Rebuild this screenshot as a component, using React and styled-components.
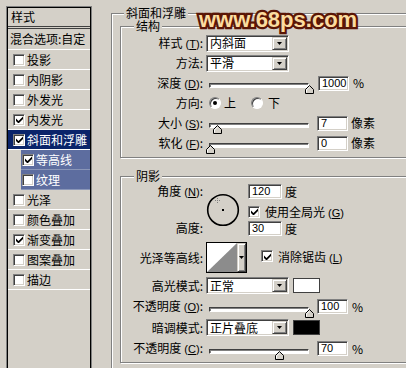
import React from 'react';
import styled, { createGlobalStyle, css } from 'styled-components';

const FACE = '#d4d0c8';

const GlobalStyle = createGlobalStyle`
  html, body { margin: 0; padding: 0; background: ${FACE}; }
  body {
    font-family: "Noto Sans CJK SC", "Liberation Sans", sans-serif;
    font-size: 12px;
    color: #000;
  }
`;

const sunken = css`
  box-sizing: border-box;
  border: 1px solid;
  border-color: #808080 #fff #fff #808080;
  box-shadow: inset 1px 1px #404040, inset -1px -1px ${FACE};
`;

const raised = css`
  box-sizing: border-box;
  border: 1px solid;
  border-color: ${FACE} #404040 #404040 ${FACE};
  box-shadow: inset 1px 1px #fff, inset -1px -1px #808080;
`;

const Window = styled.div`
  position: relative;
  width: 406px;
  height: 368px;
  overflow: hidden;
  background: ${FACE};
`;

const Dialog = styled.div`
  display: flex;
  align-items: flex-start;
  width: 640px;
  padding: 6px 0 0 6px;
`;

/* ---------- left list ---------- */

const StylePanel = styled.div`
  flex: none;
  width: 86px;
  height: 380px;
  box-sizing: border-box;
  border: 1px solid #808080;
  box-shadow: inset 1px 1px #000, inset -1px 0 #000;
  padding: 1px;
  margin-right: 19px;
`;

const PanelHead = styled.div`
  height: 18px;
  line-height: 18px;
  padding-left: 3px;
  border-bottom: 3px double #404040;
`;

const BlendRow = styled.div`
  height: 20px;
  line-height: 20px;
  padding-left: 2px;
  border-bottom: 1px solid #fff;
  white-space: nowrap;
`;

const StyleItem = styled.div`
  display: flex;
  align-items: center;
  gap: 2px;
  height: 19px;
  line-height: 14px;
  white-space: nowrap;
  border-bottom: 1px solid ${p => (p.$sub ? '#8a96b8' : '#fff')};
  margin-left: ${p => (p.$sub ? 13 : 0)}px;
  padding-left: ${p => (p.$sub ? 1 : 5)}px;
  background: ${p => (p.$active ? '#0a246a' : p.$sub ? '#5d6d9f' : 'transparent')};
  color: ${p => (p.$active || p.$sub ? '#fff' : '#000')};
`;

const CheckBox = styled.span`
  ${sunken};
  flex: none;
  display: inline-flex;
  align-items: center;
  justify-content: center;
  width: 12px;
  height: 12px;
  background: #fff;
`;

function Check({ on }) {
  return (
    <CheckBox>
      {on && (
        <svg width="7" height="7" viewBox="0 0 7 7">
          <path d="M0 2.5 L2.5 5 L7 0.5 V3 L2.5 7.5 L0 5 Z" fill="#000" />
        </svg>
      )}
    </CheckBox>
  );
}

const styleList = [
  { name: '投影' },
  { name: '内阴影' },
  { name: '外发光' },
  { name: '内发光', on: true },
  { name: '斜面和浮雕', on: true, active: true },
  { name: '等高线', on: true, sub: true },
  { name: '纹理', sub: true },
  { name: '光泽' },
  { name: '颜色叠加' },
  { name: '渐变叠加', on: true },
  { name: '图案叠加' },
  { name: '描边' },
];

/* ---------- group boxes ---------- */

const Group = styled.fieldset`
  margin: ${p => p.$mt || 0}px 0 0;
  padding: ${p => p.$pad || '0'};
  width: ${p => p.$w}px;
  border: 1px solid #808080;
  box-shadow: inset 1px 1px #fff, 1px 1px #fff;
  min-width: 0;
`;

const Caption = styled.legend`
  margin-left: ${p => p.$ml}px;
  padding: 0 2px;
  height: 12px;
  line-height: 12px;
  background: ${FACE};
`;

/* ---------- form rows ---------- */

const Row = styled.div`
  display: flex;
  align-items: center;
  height: ${p => p.$h || 20}px;
`;

const Label = styled.span`
  flex: none;
  width: 82px;
  margin-right: 3px;
  text-align: right;
  white-space: nowrap;
  line-height: 14px;
`;

const Key = styled.span`
  font-family: "Liberation Sans", sans-serif;
  font-size: 11px;
  text-decoration: underline;
`;

const Paren = styled.span`
  font-family: "Liberation Sans", sans-serif;
  font-size: 11px;
  margin-left: 3px;
`;

function Acc({ k }) {
  return (
    <Paren>
      (<Key>{k}</Key>)
    </Paren>
  );
}

const SelectBox = styled.div`
  ${sunken};
  flex: none;
  display: flex;
  align-items: center;
  width: 83px;
  height: 17px;
  padding: 0 1px 0 3px;
  background: #fff;
  line-height: 14px;
`;

const DropBtn = styled.span`
  ${raised};
  margin-left: auto;
  width: 15px;
  height: 13px;
  display: flex;
  align-items: center;
  justify-content: center;
  background: ${FACE};
`;

function Arrow() {
  return (
    <svg width="5" height="3" viewBox="0 0 5 3">
      <path d="M0 0 H5 L2.5 3 Z" fill="#000" />
    </svg>
  );
}

function Select({ children }) {
  return (
    <SelectBox>
      {children}
      <DropBtn>
        <Arrow />
      </DropBtn>
    </SelectBox>
  );
}

const SliderBox = styled.div`
  position: relative;
  flex: none;
  width: 106px;
  height: 16px;
`;

const Track = styled.div`
  box-sizing: border-box;
  margin: 8px 0 0 3px;
  width: 100px;
  height: 5px;
  border: 1px solid;
  border-color: #404040 #fff #fff #404040;
  box-shadow: inset 1px 1px #808080;
  background: #fff;
`;

const Thumb = styled.svg`
  position: absolute;
  top: 10px;
`;

function Slider({ pct }) {
  return (
    <SliderBox>
      <Track />
      <Thumb width="9" height="9" viewBox="0 0 9 9" style={{ left: `${pct - 1.5}px` }}>
        <path d="M0.5 8.5 V4.5 L4.5 0.5 L8.5 4.5 V8.5 Z" fill={FACE} stroke="#000" />
        <path d="M1.5 7.5 V4.9 L4.5 1.9" fill="none" stroke="#fff" />
      </Thumb>
    </SliderBox>
  );
}

const NumBox = styled.div`
  ${sunken};
  flex: none;
  width: ${p => p.$w || 31}px;
  height: 15px;
  margin-left: ${p => (p.$ml === undefined ? 5 : p.$ml)}px;
  padding-left: 3px;
  background: #fff;
  font-family: "Liberation Sans", sans-serif;
  font-size: 11px;
  line-height: 13px;
`;

const Unit = styled.span`
  margin-left: ${p => p.$ml || 4}px;
  line-height: 14px;
  white-space: nowrap;
`;

const Radio = styled.span`
  box-sizing: border-box;
  flex: none;
  width: 12px;
  height: 12px;
  margin-left: ${p => p.$ml}px;
  border-radius: 50%;
  border: 1px solid;
  border-color: #808080 #fff #fff #808080;
  box-shadow: inset 1px 1px #404040;
  background: #fff;
  display: flex;
  align-items: center;
  justify-content: center;
  &::after {
    content: '';
    width: 4px;
    height: 4px;
    border-radius: 50%;
    background: ${p => (p.$on ? '#000' : 'transparent')};
  }
`;

const RadioText = styled.span`
  margin-left: ${p => p.$ml}px;
  line-height: 14px;
`;

/* ---------- shadow block ---------- */

const ShadowBody = styled.div`
  padding-top: 2px;
`;

const AngleBlock = styled.div`
  display: flex;
  align-items: flex-start;
  height: 52px;
`;

const LabelCol = styled.div`
  display: flex;
  flex-direction: column;
  justify-content: space-between;
  height: 51px;
`;

const Dial = styled.svg`
  flex: none;
  margin-top: 9px;
`;

const AngleInputs = styled.div`
  display: flex;
  flex-direction: column;
  margin-left: 8px;
`;

const InputLine = styled.div`
  display: flex;
  align-items: center;
`;

const CheckLine = styled.label`
  display: flex;
  align-items: center;
  gap: 5px;
  margin: 6px 0 3px;
  height: 13px;
  white-space: nowrap;
`;

const ContourPick = styled.div`
  flex: none;
  display: flex;
  width: 41px;
  height: 31px;
  border: 1px solid #000;
  box-sizing: border-box;
`;

const ContourThumb = styled.svg`
  flex: none;
  display: block;
`;

const ContourDrop = styled.span`
  ${raised};
  flex: 1;
  display: flex;
  align-items: center;
  justify-content: center;
  background: ${FACE};
`;

const Swatch = styled.span`
  flex: none;
  width: 27px;
  height: 15px;
  margin-left: 4px;
  box-sizing: border-box;
  border: 1px solid #404040;
  background: ${p => p.$c};
`;

const AntiAlias = styled.label`
  display: flex;
  align-items: center;
  gap: 5px;
  margin: -3px 0 0 14px;
  white-space: nowrap;
`;

/* ---------- watermark ---------- */

const Watermark = styled.div`
  position: absolute;
  left: 199px;
  top: 7px;
  font-family: "Liberation Sans", "DejaVu Sans", sans-serif;
  font-weight: 700;
  font-size: 22px;
  line-height: 26px;
  color: #fbdca0;
  -webkit-text-stroke: 4.5px #5a1606;
  paint-order: stroke fill;
`;

export default function App() {
  return (
    <Window>
      <GlobalStyle />
      <Dialog>
        <StylePanel>
          <PanelHead>样式</PanelHead>
          <BlendRow>混合选项:自定</BlendRow>
          {styleList.map(item => (
            <StyleItem key={item.name} $active={item.active} $sub={item.sub}>
              <Check on={item.on} />
              <span>{item.name}</span>
            </StyleItem>
          ))}
        </StylePanel>

        <Group $w={480} $pad="0 0 20px 8px" $mt={1}>
          <Caption $ml={4}>斜面和浮雕</Caption>

          <Group $w={400} $mt={1} $pad="1px 0 4px 0">
            <Caption $ml={13}>结构</Caption>
            <Row>
              <Label>样式<Acc k="T" />:</Label>
              <Select>内斜面</Select>
            </Row>
            <Row>
              <Label>方法:</Label>
              <Select>平滑</Select>
            </Row>
            <Row>
              <Label>深度<Acc k="D" />:</Label>
              <Slider pct={100} />
              <NumBox $ml={6}>1000</NumBox>
              <Unit>%</Unit>
            </Row>
            <Row>
              <Label>方向:</Label>
              <Radio $on $ml={3} />
              <RadioText $ml={3}>上</RadioText>
              <Radio $ml={15} />
              <RadioText $ml={5}>下</RadioText>
            </Row>
            <Row>
              <Label>大小<Acc k="S" />:</Label>
              <Slider pct={8} />
              <NumBox>7</NumBox>
              <Unit $ml={3}>像素</Unit>
            </Row>
            <Row>
              <Label>软化<Acc k="F" />:</Label>
              <Slider pct={1} />
              <NumBox>0</NumBox>
              <Unit $ml={3}>像素</Unit>
            </Row>
          </Group>

          <Group $w={400} $mt={12} $pad="0 0 3px 0">
            <Caption $ml={13}>阴影</Caption>
            <ShadowBody>
              <AngleBlock>
                <LabelCol>
                  <Label>角度<Acc k="N" />:</Label>
                  <Label>高度:</Label>
                </LabelCol>
                <Dial width="34" height="34" viewBox="0 0 34 34">
                  <circle cx="17" cy="17" r="15.3" fill="none" stroke="#000" strokeWidth="1.6" />
                  <rect x="16" y="16" width="2" height="2" fill="#000" />
                  <path d="M11.5 5 V10 M9 7.5 H14" stroke="#808080" strokeWidth="1" strokeDasharray="1 1" />
                </Dial>
                <AngleInputs>
                  <InputLine>
                    <NumBox $w={34} $ml={0}>120</NumBox>
                    <Unit $ml={3}>度</Unit>
                  </InputLine>
                  <CheckLine>
                    <Check on />
                    <span>使用全局光<Acc k="G" /></span>
                  </CheckLine>
                  <InputLine>
                    <NumBox $w={34} $ml={0}>30</NumBox>
                    <Unit $ml={3}>度</Unit>
                  </InputLine>
                </AngleInputs>
              </AngleBlock>

              <Row $h={31} style={{ marginTop: 6 }}>
                <Label>光泽等高线:</Label>
                <ContourPick>
                  <ContourThumb width="30" height="29" viewBox="0 0 30 29">
                    <rect width="30" height="29" fill="#fff" />
                    <path d="M0 29 L30 0 V29 Z" fill="#8c8c8c" />
                  </ContourThumb>
                  <ContourDrop>
                    <Arrow />
                  </ContourDrop>
                </ContourPick>
                <AntiAlias>
                  <Check on />
                  <span>消除锯齿<Acc k="L" /></span>
                </AntiAlias>
              </Row>

              <Row $h={21} style={{ marginTop: 2 }}>
                <Label>高光模式:</Label>
                <Select>正常</Select>
                <Swatch $c="#fff" />
              </Row>
              <Row $h={21}>
                <Label>不透明度<Acc k="O" />:</Label>
                <Slider pct={100} />
                <NumBox>100</NumBox>
                <Unit>%</Unit>
              </Row>
              <Row $h={21}>
                <Label>暗调模式:</Label>
                <Select>正片叠底</Select>
                <Swatch $c="#000" />
              </Row>
              <Row $h={21}>
                <Label>不透明度<Acc k="C" />:</Label>
                <Slider pct={70} />
                <NumBox>70</NumBox>
                <Unit>%</Unit>
              </Row>
            </ShadowBody>
          </Group>
        </Group>
      </Dialog>
      <Watermark>www.68ps.com</Watermark>
    </Window>
  );
}
